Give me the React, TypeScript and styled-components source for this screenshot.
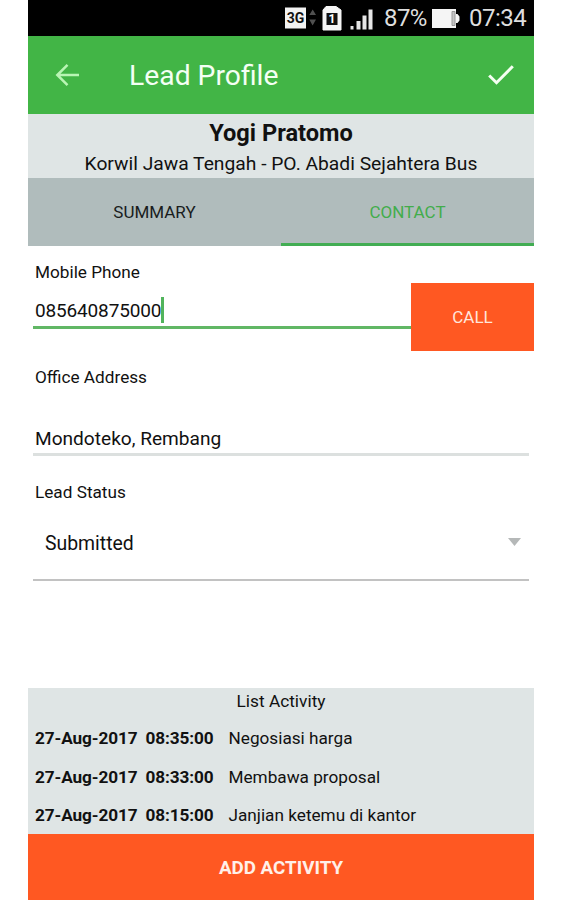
import React from "react";
import styled, { createGlobalStyle } from "styled-components";

const GlobalStyle = createGlobalStyle`
  * { box-sizing: border-box; }
  body { margin: 0; background: #fff; font-family: Roboto, "Noto Sans", sans-serif; color: #111; }
`;

const Screen = styled.main`
  width: 506px;
  height: 900px;
  margin-left: 28px;
  display: flex;
  flex-direction: column;
  overflow: hidden;
  white-space: pre;
`;

const StatusBar = styled.div`
  height: 36px;
  flex: none;
  background: #000;
  color: #dedede;
  display: flex;
  align-items: center;
  justify-content: flex-end;
  padding-right: 8px;
  font-size: 24px;
  line-height: 36px;
`;

const IconGroup = styled.div`
  display: flex;
  margin-right: 10px;
`;

const Battery = styled.span`
  width: 45px;
  letter-spacing: -0.6px;
`;

const BatteryIcon = styled.svg`
  margin: 0 9px 0 3px;
`;

const Clock = styled.span`
  width: 57px;
  letter-spacing: -0.5px;
`;

const AppBar = styled.header`
  height: 78px;
  flex: none;
  background: #42b546;
  display: flex;
  align-items: center;
  padding: 0 20px 0 27px;
`;

const Title = styled.h1`
  margin: 0 auto 0 49px;
  padding-top: 2px;
  font-size: 28.3px;
  line-height: 36px;
  font-weight: 400;
  color: #f4fff4;
`;

const Profile = styled.section`
  height: 64px;
  flex: none;
  background: #dfe5e5;
  text-align: center;
  padding-top: 4px;
`;

const Name = styled.h2`
  margin: 0;
  font-size: 23.6px;
  line-height: 30px;
  font-weight: 700;
`;

const Company = styled.p`
  margin: 1px 0 0;
  font-size: 19.25px;
  line-height: 30px;
`;

const Tabs = styled.nav`
  height: 68px;
  flex: none;
  display: grid;
  grid-template-columns: 1fr 1fr;
  background: #b0bcbc;
`;

const Tab = styled.div<{ $active?: boolean }>`
  display: flex;
  align-items: center;
  justify-content: center;
  padding-top: ${(p) => (p.$active ? 2 : 0)}px;
  padding-bottom: ${(p) => (p.$active ? 0 : 1)}px;
  font-size: 17px;
  color: ${(p) => (p.$active ? "#42ad4b" : "#191c1c")};
  border-bottom: ${(p) => (p.$active ? "3px solid #42ad53" : "0")};
`;

const Form = styled.section`
  flex: 1;
  padding-top: 16px;
`;

const Label = styled.div`
  padding-left: 7px;
  height: 21px;
  font-size: 17.2px;
  line-height: 21px;
`;

const PhoneField = styled.div`
  height: 105px;
`;

const PhoneRow = styled.div`
  display: flex;
  height: 68px;
  padding-left: 5px;
`;

const PhoneInput = styled.div`
  flex: 1;
  height: 46px;
  display: flex;
  align-items: flex-start;
  padding: 14px 0 0 2px;
  border-bottom: 3px solid #61b765;
  font-size: 19px;
  letter-spacing: -0.16px;
  line-height: 28px;
`;

const Caret = styled.span`
  width: 3px;
  height: 26px;
  background: #51b45c;
`;

const CallButton = styled.button`
  width: 123px;
  height: 68px;
  border: 0;
  padding: 0;
  background: #ff5822;
  color: #ffe6dc;
  font: 400 17px Roboto, sans-serif;
`;

const AddressField = styled.div`
  height: 115px;
`;

const AddressInput = styled.div`
  margin: 31px 5px 0;
  height: 37px;
  padding: 6px 2px 0;
  border-bottom: 3px solid #dce0df;
  font-size: 19.1px;
  line-height: 28px;
`;

const Select = styled.div`
  margin: 0 5px;
  height: 78px;
  display: flex;
  align-items: center;
  justify-content: space-between;
  padding: 4px 8px 0 12px;
  border-bottom: 2px solid #c2c2c2;
  font-size: 19.4px;
`;

const SelectArrow = styled.svg`
  margin-bottom: 2px;
`;

const Activities = styled.section`
  height: 146px;
  flex: none;
  background: #dfe5e5;
`;

const ListTitle = styled.h3`
  margin: 0;
  height: 31px;
  font-size: 17.3px;
  line-height: 27px;
  font-weight: 400;
  text-align: center;
`;

const ActivityRow = styled.div`
  height: 38.6px;
  display: grid;
  grid-template-columns: 110.5px 83px 1fr;
  padding-left: 7px;
  font-size: 17.2px;
  line-height: 38px;
`;

const Stamp = styled.span`
  font-weight: 700;
  letter-spacing: -0.1px;
`;

const AddButton = styled.button`
  height: 66px;
  flex: none;
  border: 0;
  padding: 2px 0 0;
  background: #ff5822;
  color: #fff0e9;
  font: 700 18.8px Roboto, sans-serif;
`;

const BackIcon = () => (
  <svg width="25" height="24" viewBox="0 0 25 24" fill="none" stroke="#b9f5b4" strokeWidth="2.5">
    <path d="M24 12H3M12.5 1.8L2.3 12l10.2 10.2" />
  </svg>
);

const CheckIcon = () => (
  <svg width="26" height="22" viewBox="0 0 26 22" fill="none" stroke="#f5fff2" strokeWidth="3">
    <path d="M1.2 11.5l7.3 7.2L24.8 2.2" />
  </svg>
);

const StatusIcons = () => (
  <svg width="89" height="36" viewBox="285 0 89 36">
    <rect x="285" y="7.5" width="21" height="21" fill="#f2f2f2" />
    <text x="295.5" y="23.2" textAnchor="middle" fontSize="14" fontWeight="700" fontFamily="Roboto, sans-serif" fill="#111">3G</text>
    <path d="M309.3 15l3.4-5.5L316 15zM309.3 19.5l3.3 6 3.4-6z" fill="#505050" />
    <path d="M326 6.5h10l5 3.5v20h-18V10z" fill="#f5f5f5" stroke="#f5f5f5" strokeLinejoin="round" />
    <rect x="326.5" y="13" width="11" height="12" fill="#111" />
    <text x="332" y="23.3" textAnchor="middle" fontSize="12" fontWeight="700" fontFamily="Roboto, sans-serif" fill="#fff">1</text>
    <path d="M350.5 26h3v3.500h-3zM356.500 21h4v8.500h-4zM362.500 15.500h4v14h-4zM368.500 9.500h4v20h-4z" fill="#e6e6e6" />
  </svg>
);

const activities = [
  ["27-Aug-2017", "08:35:00", "Negosiasi harga"],
  ["27-Aug-2017", "08:33:00", "Membawa proposal"],
  ["27-Aug-2017", "08:15:00", "Janjian ketemu di kantor"],
];

export default function App() {
  return (
    <>
      <GlobalStyle />
      <Screen>
        <StatusBar>
          <IconGroup><StatusIcons /></IconGroup>
          <Battery>87%</Battery>
          <BatteryIcon width="28" height="19" viewBox="0 0 28 19">
            <path d="M0 0h24v5h1.5l2 2.5v4l-2 2.5H24v5H0z" fill="#f5f5f5" />
            <path d="M20 2.5h3v14h-3z" fill="#c4c4c4" stroke="#999" />
          </BatteryIcon>
          <Clock>07:34</Clock>
        </StatusBar>
        <AppBar>
          <BackIcon />
          <Title>Lead Profile</Title>
          <CheckIcon />
        </AppBar>
        <Profile>
          <Name>Yogi Pratomo</Name>
          <Company>Korwil Jawa Tengah - PO. Abadi Sejahtera Bus</Company>
        </Profile>
        <Tabs>
          <Tab>SUMMARY</Tab>
          <Tab $active>CONTACT</Tab>
        </Tabs>
        <Form>
          <PhoneField>
            <Label>Mobile Phone</Label>
            <PhoneRow>
              <PhoneInput>085640875000<Caret /></PhoneInput>
              <CallButton>CALL</CallButton>
            </PhoneRow>
          </PhoneField>
          <AddressField>
            <Label>Office Address</Label>
            <AddressInput>Mondoteko, Rembang</AddressInput>
          </AddressField>
          <Label>Lead Status</Label>
          <Select>
            Submitted
            <SelectArrow width="13" height="8" viewBox="0 0 13 8">
              <path d="M0 0h13L6.5 8z" fill="#b5b8b8" />
            </SelectArrow>
          </Select>
        </Form>
        <Activities>
          <ListTitle>List Activity</ListTitle>
          {activities.map(([date, time, note]) => (
            <ActivityRow key={time}>
              <Stamp>{date}</Stamp>
              <Stamp>{time}</Stamp>
              <span>{note}</span>
            </ActivityRow>
          ))}
        </Activities>
        <AddButton>ADD ACTIVITY</AddButton>
      </Screen>
    </>
  );
}
